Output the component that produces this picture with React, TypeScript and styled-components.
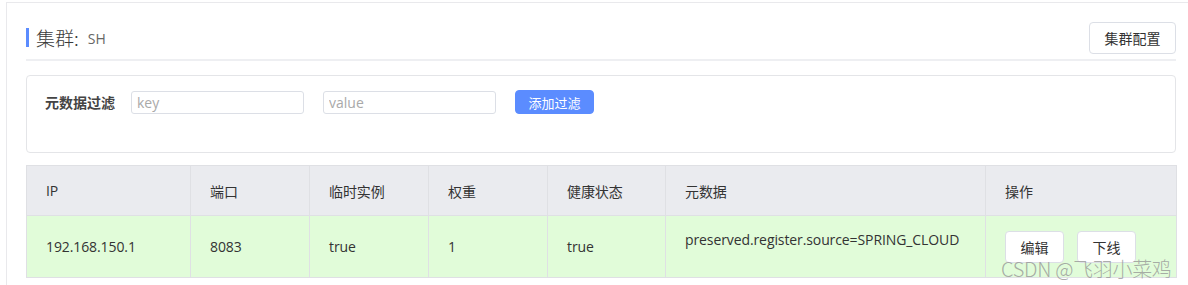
import React from "react";
import styled, { createGlobalStyle } from "styled-components";

const Global = createGlobalStyle`
  html, body { margin: 0; padding: 0; background: #fff; overflow: hidden; }
  body { font-family: "Open Sans", "Noto Sans CJK SC", sans-serif; color: #333; }
  * { box-sizing: border-box; }
`;

const Page = styled.div`
  position: relative;
  width: 1188px;
  height: 285px;
  overflow: hidden;
  padding: 2px 0 0 6px;
`;

const Card = styled.div`
  width: 1200px;
  height: 400px;
  border: 1px solid #e9e9ec;
  padding: 19px 0 0 19px;
`;

const Inner = styled.div`
  width: 1150px;
`;

const HeaderRow = styled.div`
  display: flex;
  align-items: center;
  justify-content: space-between;
  height: 32px;
`;

const Title = styled.div`
  display: flex;
  align-items: center;
  border-left: 3px solid #5b8cff;
  height: 19px;
  padding-left: 7px;
  margin-top: -1px;
`;

const TitleMain = styled.span`
  font-family: "Noto Sans CJK SC", sans-serif;
  font-size: 19px;
  font-weight: 300;
  color: #3a3a3a;
`;

const TitleSub = styled.span`
  font-size: 14px;
  color: #666;
  margin-left: 9px;
  margin-top: 2px;
`;

const Button = styled.button<{ $primary?: boolean; $w?: number; $h?: number }>`
  font-family: "Noto Sans CJK SC", sans-serif;
  font-size: ${(p) => (p.$primary ? 13 : 14)}px;
  font-weight: 400;
  height: ${(p) => p.$h ?? 32}px;
  width: ${(p) => p.$w ?? 60}px;
  padding: 0;
  border-radius: 4px;
  border: 1px solid ${(p) => (p.$primary ? "#5b8cff" : "#dcdfe6")};
  background: ${(p) => (p.$primary ? "#5b8cff" : "#fff")};
  color: ${(p) => (p.$primary ? "#fff" : "#333")};
  cursor: pointer;
`;

const Divider = styled.div`
  height: 2px;
  background: #eeeff2;
  margin-top: 5px;
`;

const FilterCard = styled.div`
  margin-top: 14px;
  height: 78px;
  border: 1px solid #e4e5e8;
  border-radius: 4px;
  padding: 14px 0 0 18px;
`;

const FilterRow = styled.div`
  display: flex;
  align-items: center;
  height: 24px;
`;

const Label = styled.span`
  font-family: "Noto Sans CJK SC", sans-serif;
  font-size: 14px;
  font-weight: 700;
  color: #444;
  width: 86px;
`;

const Input = styled.input`
  width: 173px;
  height: 23px;
  border: 1px solid #dcdfe6;
  border-radius: 3px;
  padding: 0 5px;
  font-family: "Open Sans", sans-serif;
  font-size: 14px;
  color: #333;
  margin-right: 19px;
  outline: none;
  &::placeholder { color: #a9a9a9; }
`;

const Table = styled.table`
  margin-top: 12px;
  width: 1150px;
  border-collapse: collapse;
  table-layout: fixed;
  font-size: 14px;
  letter-spacing: -0.1px;
`;

const Th = styled.th<{ $w: number }>`
  width: ${(p) => p.$w}px;
  height: 50px;
  background: #eaebef;
  border: 1px solid #dfe0e4;
  text-align: left;
  font-weight: 400;
  padding: 0 0 0 19px;
  color: #333;
  font-family: "Open Sans", "Noto Sans CJK SC", sans-serif;
`;

const Td = styled.td<{ $top?: boolean }>`
  height: 62px;
  background: #e1fcd9;
  border: 1px solid #dfe0e4;
  padding: ${(p) => (p.$top ? "14px 0 0 19px" : "0 0 0 19px")};
  vertical-align: ${(p) => (p.$top ? "top" : "middle")};
  color: #333;
`;

const Actions = styled.div`
  display: flex;
  gap: 13px;
`;

const Watermark = styled.div`
  position: absolute;
  left: 1001px;
  top: 254px;
  font-family: "Noto Sans CJK SC", sans-serif;
  font-size: 20px;
  font-weight: 300;
  color: rgba(150, 150, 150, 0.8);
  white-space: nowrap;
  pointer-events: none;
  letter-spacing: -0.3px;
`;

const columns = [
  { name: "IP", w: 164 },
  { name: "端口", w: 119 },
  { name: "临时实例", w: 119 },
  { name: "权重", w: 119 },
  { name: "健康状态", w: 118 },
  { name: "元数据", w: 320 },
  { name: "操作", w: 191 },
];

export default function App() {
  return (
    <Page>
      <Global />
      <Card>
        <Inner>
          <HeaderRow>
            <Title>
              <TitleMain>集群:</TitleMain>
              <TitleSub>SH</TitleSub>
            </Title>
            <Button $w={87}>集群配置</Button>
          </HeaderRow>
          <Divider />
          <FilterCard>
            <FilterRow>
              <Label>元数据过滤</Label>
              <Input placeholder="key" />
              <Input placeholder="value" />
              <Button $primary $w={79} $h={24}>添加过滤</Button>
            </FilterRow>
          </FilterCard>
          <Table>
            <thead>
              <tr>
                {columns.map((c) => (
                  <Th key={c.name} $w={c.w}>{c.name}</Th>
                ))}
              </tr>
            </thead>
            <tbody>
              <tr>
                <Td>192.168.150.1</Td>
                <Td>8083</Td>
                <Td>true</Td>
                <Td>1</Td>
                <Td>true</Td>
                <Td $top>preserved.register.source=SPRING_CLOUD</Td>
                <Td>
                  <Actions>
                    <Button $w={59}>编辑</Button>
                    <Button $w={59}>下线</Button>
                  </Actions>
                </Td>
              </tr>
            </tbody>
          </Table>
        </Inner>
      </Card>
      <Watermark>CSDN @飞羽小菜鸡</Watermark>
    </Page>
  );
}
